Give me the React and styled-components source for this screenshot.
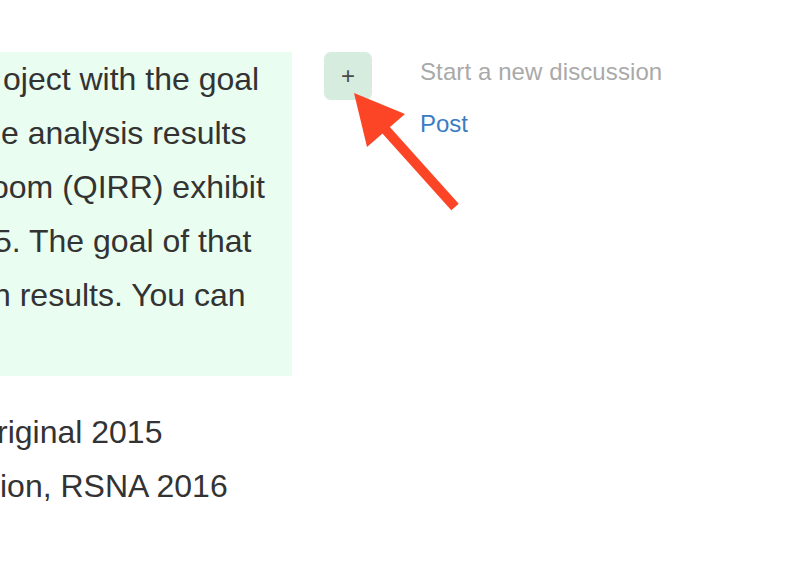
import React from "react";
import styled, { createGlobalStyle } from "styled-components";

const colors = {
    text: "#333333",
    calloutBg: "#e9fdf0",
    buttonBg: "#d6ecde",
    muted: "#a9a9a9",
    link: "#3a7cc2",
    arrow: "#fc4526",
};

const GlobalStyle = createGlobalStyle`
    html, body {
        margin: 0;
        padding: 0;
        background: #ffffff;
        overflow: hidden;
    }
    body {
        font-family: "Liberation Sans", Arial, Helvetica, sans-serif;
        color: ${colors.text};
    }
`;

const Page = styled.div`
    position: relative;
    width: 800px;
    height: 568px;
    display: flex;
    align-items: flex-start;
    padding-top: 52px;
    box-sizing: border-box;
`;

const Article = styled.div`
    width: 292px;
    flex-shrink: 0;
    overflow: hidden;
`;

const Callout = styled.div`
    background: ${colors.calloutBg};
    height: 324px;
`;

const Line = styled.div`
    font-size: 32px;
    line-height: 54px;
    white-space: nowrap;
    margin-left: ${(p) => p.offset || 0}px;
`;

const List = styled.div`
    margin-top: 29px;
`;

const Sidebar = styled.div`
    display: flex;
    align-items: flex-start;
    gap: 48px;
    margin-left: 32px;
`;

const AddButton = styled.button`
    width: 48px;
    height: 48px;
    border: none;
    border-radius: 7px;
    background: ${colors.buttonBg};
    color: #4a4a4a;
    font-family: "Liberation Sans", Arial, sans-serif;
    font-size: 24px;
    font-weight: 300;
    padding: 0;
    display: flex;
    align-items: center;
    justify-content: center;
`;

const Discussion = styled.div`
    display: flex;
    flex-direction: column;
    gap: 16px;
    padding-top: 2px;
    font-size: 24px;
    line-height: 36px;
`;

const Placeholder = styled.div`
    color: ${colors.muted};
    letter-spacing: 0.1px;
`;

const PostLink = styled.a`
    color: ${colors.link};
    text-decoration: none;
`;

const ArrowLayer = styled.svg`
    position: absolute;
    left: 0;
    top: 0;
    pointer-events: none;
`;

const calloutLines = [
    { text: "oject with the goal", offset: 3 },
    { text: "e analysis results", offset: 1 },
    { text: "oom (QIRR) exhibit", offset: -9 },
    { text: "5. The goal of that", offset: -6 },
    { text: "n results. You can", offset: -7 },
];

const listLines = [
    { text: "riginal 2015", offset: -3 },
    { text: "ion, RSNA 2016", offset: 0 },
];

export default function App() {
    return (
        <>
            <GlobalStyle />
            <Page>
                <Article>
                    <Callout>
                        {calloutLines.map((l, i) => (
                            <Line key={i} offset={l.offset}>{l.text}</Line>
                        ))}
                    </Callout>
                    <List>
                        {listLines.map((l, i) => (
                            <Line key={i} offset={l.offset}>{l.text}</Line>
                        ))}
                    </List>
                </Article>
                <Sidebar>
                    <AddButton>+</AddButton>
                    <Discussion>
                        <Placeholder>Start a new discussion</Placeholder>
                        <PostLink href="#">Post</PostLink>
                    </Discussion>
                </Sidebar>
                <ArrowLayer width="800" height="568" viewBox="0 0 800 568">
                    <line x1="385" y1="129" x2="455" y2="207" stroke={colors.arrow} strokeWidth="10" />
                    <polygon points="354,93 405,114 367,147" fill={colors.arrow} />
                </ArrowLayer>
            </Page>
        </>
    );
}
